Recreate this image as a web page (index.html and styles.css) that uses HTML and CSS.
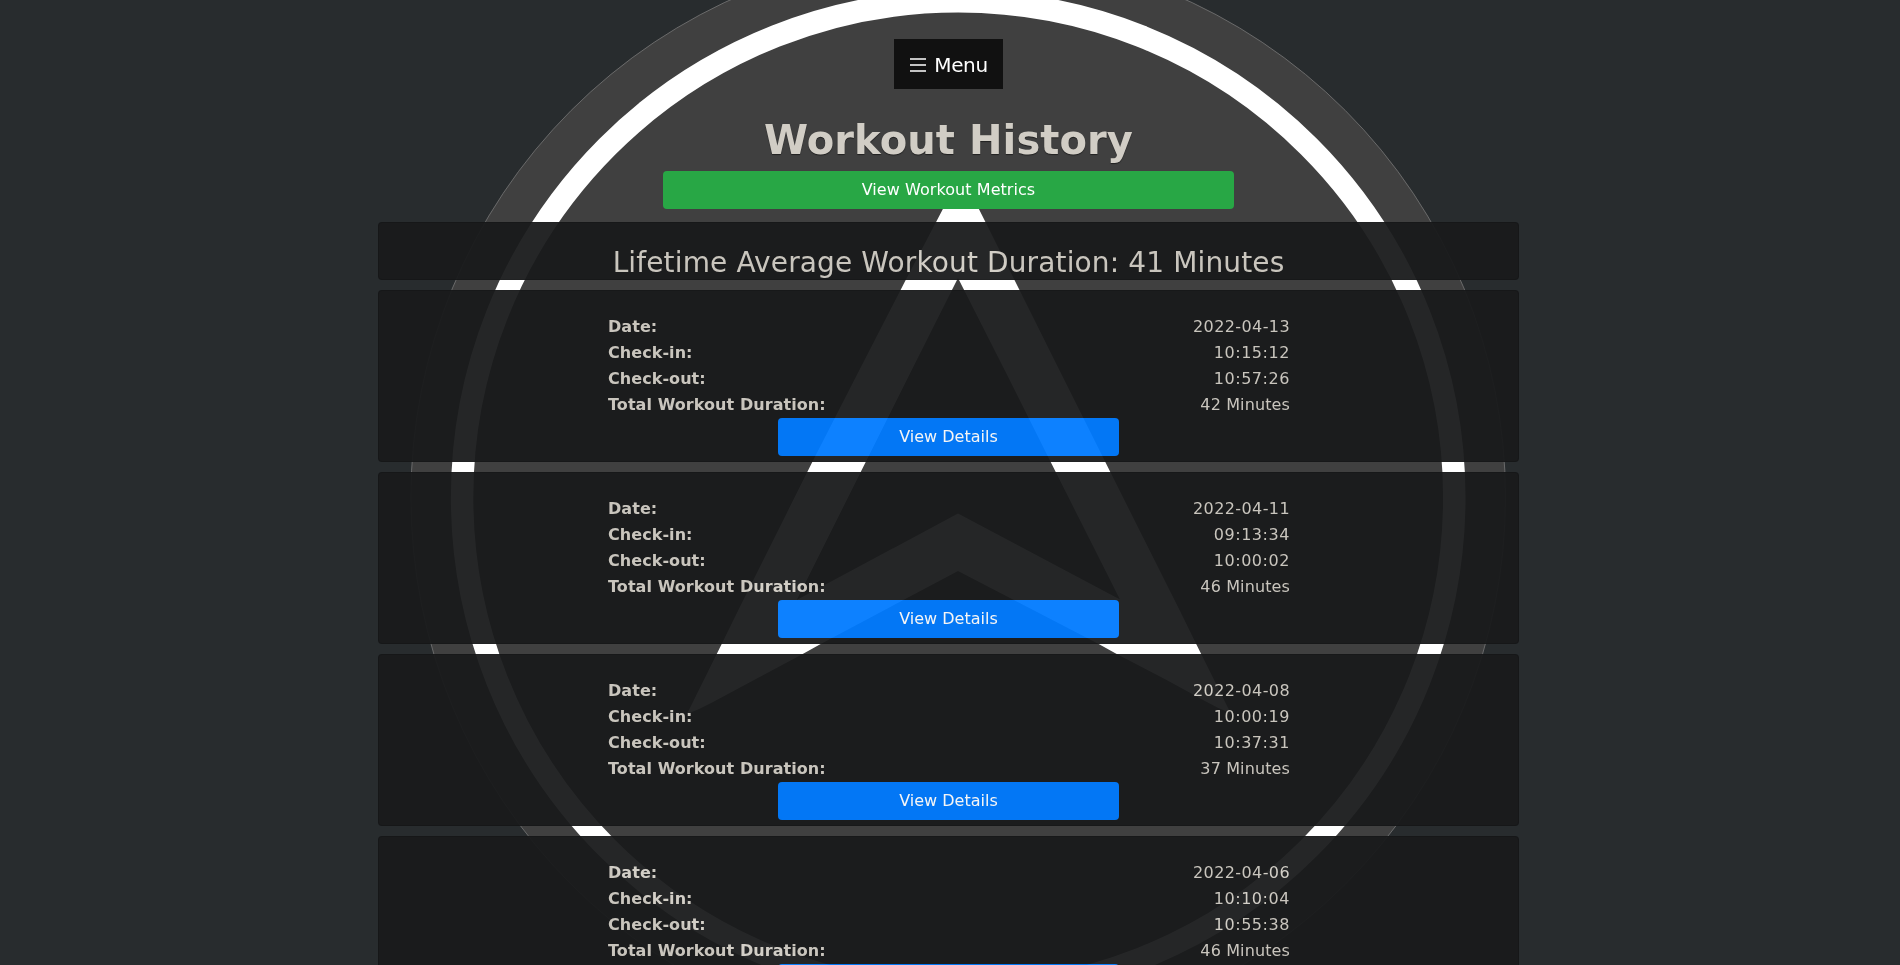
FILE: index.html
```
<!DOCTYPE html>
<html lang="en">
<head>
<meta charset="utf-8">
<title>Workout History</title>
<link rel="stylesheet" href="styles.css">
</head>
<body>
<svg class="backdrop" viewBox="0 0 1900 965" aria-hidden="true">
  <circle cx="958.2" cy="497.4" r="547.3" fill="#404040" stroke="#777" stroke-width="0.8"/>
  <circle cx="958.2" cy="497.4" r="496.1" fill="none" stroke="#fff" stroke-width="22.4"/>
  <path fill="#fff" fill-rule="evenodd" d="M961 174 L978.9 209 L1014.5 280 L1064.3 380 L1105.3 462 L1180 611 L1196.2 644 L1230.5 713 Q1217 708 1205 701 L1166.7 680 L1116.7 654 L1098.7 644 L958 571 L820.7 644 L802.7 654 L754 680 L713 702 Q700 709 687 714 L721.7 644 L740 606.7 L812.3 462 L854.3 380 L905.7 280 L942.9 209 Z M958 278 L906.7 380 L865.7 462 L796.7 600 L958 513.5 L1120 599.5 L1050.7 462 L1009.7 380 Z"/>
</svg>
<main class="page">
  <button class="menu"><svg class="bars" viewBox="0 0 16 14"><path d="M0 1h16M0 7h16M0 13h16"/></svg>Menu</button>
  <h1 class="title">Workout History</h1>
  <a class="btn metrics">View Workout Metrics</a>
  <section class="card summary"><span class="average">Lifetime Average Workout Duration: 41 Minutes</span></section>
  <section class="card">
    <dl class="facts">
      <div class="row"><dt>Date:</dt><dd class="date">2022-04-13</dd></div>
      <div class="row"><dt>Check-in:</dt><dd class="time">10:15:12</dd></div>
      <div class="row"><dt>Check-out:</dt><dd class="time">10:57:26</dd></div>
      <div class="row"><dt>Total Workout Duration:</dt><dd class="total">42 Minutes</dd></div>
    </dl>
    <a class="btn details">View Details</a>
  </section>
  <section class="card">
    <dl class="facts">
      <div class="row"><dt>Date:</dt><dd class="date">2022-04-11</dd></div>
      <div class="row"><dt>Check-in:</dt><dd class="time">09:13:34</dd></div>
      <div class="row"><dt>Check-out:</dt><dd class="time">10:00:02</dd></div>
      <div class="row"><dt>Total Workout Duration:</dt><dd class="total">46 Minutes</dd></div>
    </dl>
    <a class="btn details">View Details</a>
  </section>
  <section class="card">
    <dl class="facts">
      <div class="row"><dt>Date:</dt><dd class="date">2022-04-08</dd></div>
      <div class="row"><dt>Check-in:</dt><dd class="time">10:00:19</dd></div>
      <div class="row"><dt>Check-out:</dt><dd class="time">10:37:31</dd></div>
      <div class="row"><dt>Total Workout Duration:</dt><dd class="total">37 Minutes</dd></div>
    </dl>
    <a class="btn details">View Details</a>
  </section>
  <section class="card">
    <dl class="facts">
      <div class="row"><dt>Date:</dt><dd class="date">2022-04-06</dd></div>
      <div class="row"><dt>Check-in:</dt><dd class="time">10:10:04</dd></div>
      <div class="row"><dt>Check-out:</dt><dd class="time">10:55:38</dd></div>
      <div class="row"><dt>Total Workout Duration:</dt><dd class="total">46 Minutes</dd></div>
    </dl>
    <a class="btn details"></a>
  </section>
</main>
</body>
</html>
```
FILE: styles.css
```
* { box-sizing: border-box; }
html, body { margin: 0; height: 100%; }
body {
  overflow: hidden;
  background: #282c2e;
  color: #d1cdc5;
  font: 16px/26px Verdana, "DejaVu Sans", sans-serif;
}
.backdrop { position: fixed; top: 0; left: 0; width: 1900px; height: 965px; }
.page {
  position: relative;
  display: flex;
  flex-direction: column;
  align-items: center;
  width: 1897px;
  height: 965px;
  padding-top: 39px;
  overflow: hidden;
}
.page > * { flex: none; }
.menu {
  display: flex;
  align-items: center;
  justify-content: center;
  gap: 8px;
  width: 109px;
  height: 50px;
  padding: 2px 0 0 1px;
  border: 0;
  background: #111;
  color: #fff;
  font: 20px "DejaVu Sans", sans-serif;
  letter-spacing: -0.4px;
}
.bars { width: 16px; height: 14px; fill: none; stroke: #fff; stroke-width: 1.5; }
.title {
  margin: 27px 0 7px;
  height: 48px;
  font-size: 40px;
  line-height: 48px;
  letter-spacing: 0.08px;
  white-space: nowrap;
  text-shadow: 0 1px 1px rgba(0, 0, 0, 0.5);
}
.btn {
  display: block;
  height: 38px;
  border-radius: 4px;
  color: #fff;
  line-height: 38px;
  text-align: center;
}
.metrics { width: 571px; margin-bottom: 13px; background: #28a745; letter-spacing: 0.06px; }
.card {
  display: flex;
  flex-direction: column;
  align-items: center;
  width: 1141px;
  height: 172px;
  margin-bottom: 10px;
  padding-top: 23px;
  border: 1px solid rgba(0, 0, 0, 0.125);
  border-radius: 4px;
  background: #1a1b1c;
  opacity: 0.95;
}
.summary { height: 58px; }
.average { font-size: 28px; line-height: 34px; letter-spacing: 0.13px; white-space: nowrap; }
.facts { width: 683px; margin: 0; padding-left: 1px; }
.row { display: flex; justify-content: space-between; height: 26px; }
.row dt { font-weight: bold; letter-spacing: 0.06px; }
.row dd { margin: 0; }
.row .date { letter-spacing: 0.4px; }
.row .time { letter-spacing: 0.55px; }
.row .total { letter-spacing: 0.12px; }
.details { width: 341px; background: #007bff; }
```
